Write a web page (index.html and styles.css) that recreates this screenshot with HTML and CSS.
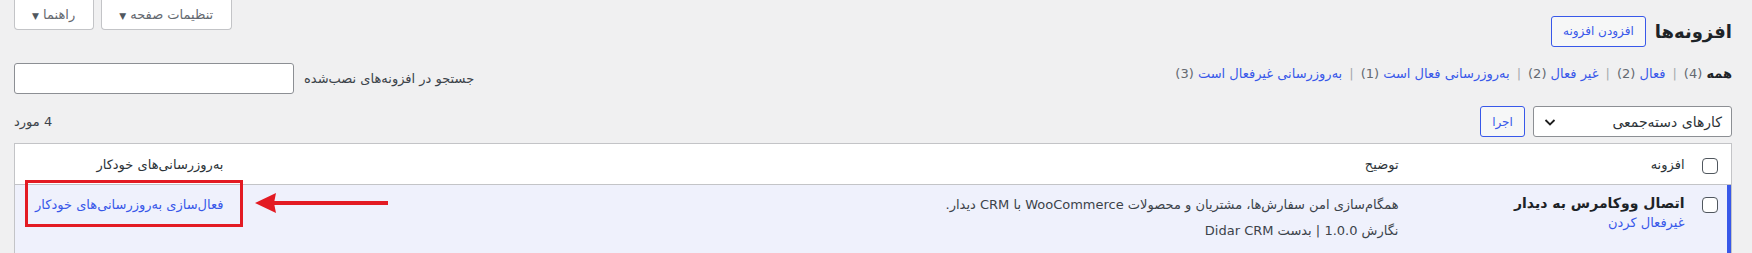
FILE: index.html
```html
<!DOCTYPE html>
<html lang="fa" dir="rtl">
<head>
    <meta charset="UTF-8">
    <meta name="viewport" content="width=device-width, initial-scale=1.0">
    <title>افزونه‌ها</title>
    <link rel="stylesheet" href="styles.css">
</head>
<body>
    <div class="page">
        <div class="top-area">
            <div class="title-row">
                <h1>افزونه‌ها</h1>
                <a class="title-action" href="#">افزودن افزونه</a>
            </div>
            <div class="screen-links">
                <button class="meta-button">تنظیمات صفحه <span class="caret">▼</span></button>
                <button class="meta-button">راهنما <span class="caret">▼</span></button>
            </div>
        </div>

        <div class="filter-row">
            <ul class="subsubsub">
                <li><span class="current">همه</span> <span class="count">(4)</span><span class="sep">|</span></li>
                <li><a href="#">فعال</a> <span class="count">(2)</span><span class="sep">|</span></li>
                <li><a href="#">غیر فعال</a> <span class="count">(2)</span><span class="sep">|</span></li>
                <li><a href="#">به‌روزرسانی فعال است</a> <span class="count">(1)</span><span class="sep">|</span></li>
                <li><a href="#">به‌روزرسانی غیرفعال است</a> <span class="count">(3)</span></li>
            </ul>
            <div class="search-box">
                <label for="plugin-search">جستجو در افزونه‌های نصب‌شده</label>
                <input type="search" id="plugin-search">
            </div>
        </div>

        <div class="tablenav">
            <div class="bulk">
                <div class="select">
                    <span>کارهای دسته‌جمعی</span>
                    <svg width="16" height="16" viewBox="0 0 16 16"><path d="M3.5 6 L8 10.5 L12.5 6" fill="none" stroke="#1e1e1e" stroke-width="1.8"/></svg>
                </div>
                <button class="apply">اجرا</button>
            </div>
            <div class="items">4 مورد</div>
        </div>

        <div class="table-wrap">
            <table class="plugins">
                <colgroup>
                    <col class="col-check">
                    <col class="col-name">
                    <col>
                    <col class="col-auto">
                </colgroup>
                <thead>
                    <tr>
                        <th class="check"><input type="checkbox"></th>
                        <th>افزونه</th>
                        <th>توضیح</th>
                        <th>به‌روزرسانی‌های خودکار</th>
                    </tr>
                </thead>
                <tbody>
                    <tr class="active">
                        <td class="check"><input type="checkbox"></td>
                        <td class="plugin-title">
                            <strong>اتصال ووکامرس به دیدار</strong>
                            <div class="row-actions"><a href="#">غیرفعال کردن</a></div>
                        </td>
                        <td class="desc">
                            <p>همگام‌سازی امن سفارش‌ها، مشتریان و محصولات WooCommerce با CRM دیدار.</p>
                            <p class="version">نگارش 1.0.0 | بدست Didar CRM</p>
                        </td>
                        <td class="auto"><a href="#">فعال‌سازی به‌روزرسانی‌های خودکار</a></td>
                    </tr>
                </tbody>
            </table>
            <div class="mark-box"></div>
            <svg class="mark-arrow" width="133" height="20" viewBox="0 0 133 20">
                <polygon points="0,10 21,0 19,10 21,20" fill="#e31b23"/>
                <rect x="18" y="8" width="115" height="4" fill="#e31b23"/>
            </svg>
        </div>
    </div>
</body>
</html>
```

FILE: styles.css
```css
html {
    direction: rtl;
}
body {
    margin: 0;
    background: #f0f0f1;
    font-family: "DejaVu Sans", sans-serif;
    font-size: 13px;
    color: #3c434a;
}
a {
    color: #3858e9;
    text-decoration: none;
}
.page {
    padding: 0 20px 0 14px;
}
.top-area {
    display: flex;
    justify-content: space-between;
    align-items: flex-start;
}
.title-row {
    display: flex;
    align-items: center;
    gap: 9px;
    margin-top: 16px;
}
.title-row h1 {
    margin: 0;
    font-size: 18px;
    font-weight: bold;
    color: #1d2327;
}
.title-action {
    display: inline-block;
    height: 29px;
    line-height: 29px;
    padding: 0 11px;
    border: 1px solid #3858e9;
    border-radius: 3px;
    background: #f6f7f7;
    font-size: 12px;
}
.screen-links {
    display: flex;
    gap: 7px;
}
.meta-button {
    height: 30px;
    padding: 0 18px 0 17px;
    border: 1px solid #c3c4c7;
    border-top: none;
    border-radius: 0 0 4px 4px;
    background: #fff;
    color: #646970;
    font-family: inherit;
    font-size: 13px;
}
.caret {
    font-size: 9px;
    color: #50575e;
}
.filter-row {
    display: flex;
    justify-content: space-between;
    align-items: flex-start;
    margin-top: 16px;
}
.subsubsub {
    list-style: none;
    margin: 0;
    padding: 0;
    display: flex;
    line-height: 22px;
    color: #646970;
}
.subsubsub .current {
    font-weight: bold;
    color: #1d2327;
}
.subsubsub .sep {
    color: #a7aaad;
    margin: 0 7px;
}
.search-box {
    display: flex;
    align-items: center;
    gap: 10px;
}
.search-box label {
    color: #3c434a;
}
.search-box input {
    width: 280px;
    height: 31px;
    box-sizing: border-box;
    border: 1px solid #8c8f94;
    border-radius: 3px;
    background: #fff;
    margin: 0;
}
.tablenav {
    display: flex;
    justify-content: space-between;
    align-items: center;
    margin-top: 12px;
}
.bulk {
    display: flex;
    gap: 8px;
}
.select {
    width: 199px;
    height: 31px;
    box-sizing: border-box;
    display: flex;
    justify-content: space-between;
    align-items: center;
    padding: 0 9px 0 8px;
    border: 1px solid #8c8f94;
    border-radius: 3px;
    background: #fff;
    font-size: 14px;
    color: #2c3338;
}
.apply {
    width: 45px;
    height: 31px;
    border: 1px solid #3858e9;
    border-radius: 3px;
    background: #f6f7f7;
    color: #3858e9;
    font-family: inherit;
    font-size: 12px;
    padding: 0;
}
.items {
    color: #3c434a;
}
.table-wrap {
    position: relative;
    margin-top: 6px;
}
.plugins {
    width: 100%;
    table-layout: fixed;
    border-collapse: collapse;
    border: 1px solid #c3c4c7;
    background: #fff;
}
.col-check {
    width: 37px;
}
.col-name {
    width: 286px;
}
.col-auto {
    width: 219px;
}
.plugins th {
    text-align: right;
    font-weight: normal;
    color: #2c3338;
    height: 36px;
    padding: 0 10px;
    border-bottom: 1px solid #c3c4c7;
}
.plugins th.check {
    padding: 4px 13px 0 0;
}
.plugins input[type="checkbox"] {
    appearance: none;
    width: 16px;
    height: 16px;
    margin: 0;
    border: 1px solid #50575e;
    border-radius: 4px;
    background: #fff;
    display: block;
}
.plugins td {
    vertical-align: top;
    height: 69px;
    box-sizing: border-box;
    padding: 11px 10px 0;
    border-bottom: 1px solid #c3c4c7;
}
tr.active td {
    background: #eff1fc;
}
tr.active td.check {
    padding: 12px 13px 0 0;
    box-shadow: inset -4px 0 0 #3858e9;
}
.plugin-title {
    padding-top: 9px !important;
}
.plugin-title strong {
    display: block;
    font-size: 14px;
    line-height: 18px;
    color: #1d2327;
}
.row-actions {
    margin-top: 2px;
    line-height: 18px;
}
.desc p {
    margin: 0;
    line-height: 18px;
}
.desc .version {
    margin-top: 8px;
}
.auto {
    line-height: 18px;
}
.mark-box {
    position: absolute;
    top: 37px;
    left: 11px;
    width: 218px;
    height: 47px;
    box-sizing: border-box;
    border: 3px solid #e31b23;
}
.mark-arrow {
    position: absolute;
    top: 50px;
    left: 241px;
}
```
